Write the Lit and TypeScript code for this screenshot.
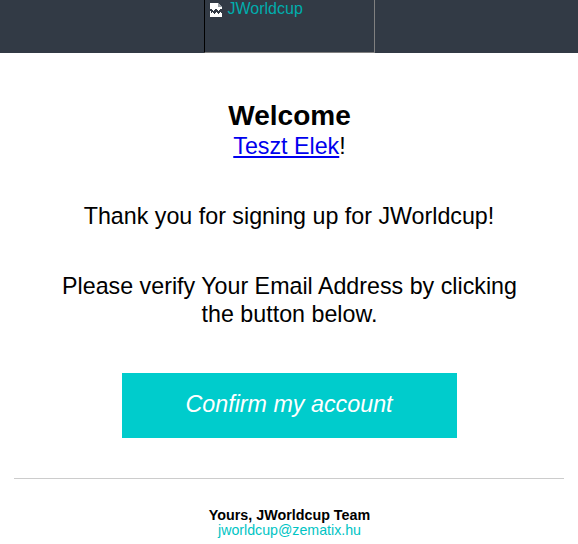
import { LitElement, html, css } from "lit";
import { customElement } from "lit/decorators.js";

@customElement("app-root")
export class AppRoot extends LitElement {
  static styles = css`
    :host { display: block; width: 578px; height: 544px; overflow: hidden; background: #fff; font-family: "Liberation Sans", Arial, sans-serif; color: #000; }
    .header { height: 53px; background: #323a45; display: flex; justify-content: center; box-sizing: border-box; }
    .logo { width: 171px; height: 53px; box-sizing: border-box; border-left: 1px solid #000; border-right: 1px solid #808080; border-bottom: 1px solid #808080; padding-left: 5px; display: flex; align-items: flex-start; gap: 6px; color: #00adad; font-size: 16px; line-height: 18px; }
    .logo svg { width: 12px; height: 14px; margin-top: 3px; flex: none; }
    .main { display: flex; flex-direction: column; align-items: center; text-align: center; }
    h1 { margin: 47px 0 0; font-size: 28px; line-height: 32px; font-weight: 700; padding-left: 1px; }
    .name { font-size: 23.25px; line-height: 28px; margin: 0; padding-left: 1px; }
    .name a { color: #0000ee; }
    .p { font-size: 23.25px; line-height: 28px; margin: 0; }
    .thanks { margin-top: 42px; }
    .verify { margin-top: 42px; width: 480px; padding-left: 1px; }
    .btn { margin-top: 45px; width: 335px; height: 65px; background: #00cccc; color: #fff; font-style: italic; font-size: 23.3px; display: flex; align-items: center; justify-content: center; padding-bottom: 2px; box-sizing: border-box; }
    hr { width: 550px; margin: 40px 0 0; border: 0; border-top: 1px solid #ccc; }
    .footer { margin-top: 29px; line-height: 15px; padding-left: 1px; }
    .footer b { display: block; font-size: 14.3px; }
    .footer a { color: #00c4c4; text-decoration: none; display: block; font-size: 14.2px; }
  `;
  render() {
    return html`
      <div class="header">
        <div class="logo">
          <svg viewBox="0 0 12 14" shape-rendering="crispEdges">
            <path fill="#fff" d="M0 0h8l4 4v10H0z"/>
            <path fill="#9aa0a6" d="M8 0v4h4z"/>
            <path fill="#323a45" d="M0 6h2v1h1v1h1v-1h1v-1h2v1h1v1h1v-1h1v-1h2v4h-1v-1h-1v1h-1v1h-1v-1h-1v-1h-1v1h-1v1h-1v-1h-1v-1h-1v1h-1z"/>
          </svg>
          <span>JWorldcup</span>
        </div>
      </div>
      <div class="main">
        <h1>Welcome</h1>
        <p class="name"><a href="#">Teszt Elek</a>!</p>
        <p class="p thanks">Thank you for signing up for JWorldcup!</p>
        <p class="p verify">Please verify Your Email Address by clicking the button below.</p>
        <div class="btn">Confirm my account</div>
        <hr />
        <div class="footer"><b>Yours, JWorldcup Team</b><a href="#">jworldcup@zematix.hu</a></div>
      </div>
    `;
  }
}
